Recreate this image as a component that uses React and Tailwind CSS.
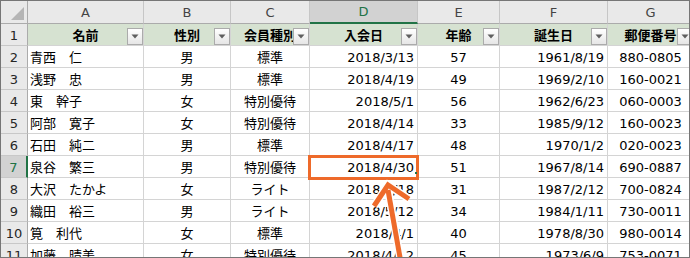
import React from "react";

const FONT = "font-['DejaVu_Sans','Noto_Sans_CJK_JP',sans-serif]";

const W = ["w-[116px]", "w-[87px]", "w-[79px]", "w-[108px]", "w-[82px]", "w-[108px]", "w-[86px]"];
const ALIGN = [
  "justify-start pl-[2px]",
  "justify-center",
  "justify-center",
  "justify-end pr-[3px]",
  "justify-center",
  "justify-end pr-[3px]",
  "justify-center",
];
const LETTERS = ["A", "B", "C", "D", "E", "F", "G"];
const HEAD = ["名前", "性別", "会員種別", "入会日", "年齢", "誕生日", "郵便番号"];

const DATA = [
  ["青西　仁", "男", "標準", "2018/3/13", "57", "1961/8/19", "880-0805"],
  ["浅野　忠", "男", "標準", "2018/4/19", "49", "1969/2/10", "160-0021"],
  ["東　幹子", "女", "特別優待", "2018/5/1", "56", "1962/6/23", "060-0003"],
  ["阿部　寛子", "女", "特別優待", "2018/4/14", "33", "1985/9/12", "160-0023"],
  ["石田　純二", "男", "標準", "2018/4/17", "48", "1970/1/2", "020-0023"],
  ["泉谷　繁三", "男", "特別優待", "2018/4/30", "51", "1967/8/14", "690-0887"],
  ["大沢　たかよ", "女", "ライト", "2018/4/18", "31", "1987/2/12", "700-0824"],
  ["織田　裕三", "男", "ライト", "2018/5/12", "34", "1984/1/11", "730-0011"],
  ["筧　利代", "女", "標準", "2018/4/1", "40", "1978/8/30", "980-0014"],
  ["加藤　晴美", "女", "特別優待", "2018/4/12", "45", "1973/6/9", "753-0071"],
];

function FilterButton() {
  return (
    <div className="absolute right-0 bottom-0 w-[16px] h-[17px] border border-[#ababab] bg-linear-to-b from-white to-[#e6e6e6] flex items-center justify-center">
      <svg width="8" height="5" viewBox="0 0 8 5">
        <polygon points="0.5,0.5 7.5,0.5 4,4.5" fill="#5f5f5f" />
      </svg>
    </div>
  );
}

function RowHeader({ n, selected }) {
  return (
    <div
      className={
        "shrink-0 w-[27px] h-full flex items-center justify-center pt-px border-b border-[#c8c8c8] " +
        (selected
          ? "bg-[#d2d2d2] text-[#217346] border-r-2 border-r-[#217346]"
          : "bg-[#e9e9e9] text-[#262626] border-r border-r-[#ababab]")
      }
    >
      {n}
    </div>
  );
}

export default function App() {
  return (
    <div className={"relative w-[690px] h-[258px] overflow-hidden border border-[#767676] bg-white text-[13px] leading-none " + FONT}>
      <div className="flex h-[23px]">
        <div className="shrink-0 w-[27px] h-full bg-[#e9e9e9] border-r border-b border-[#ababab] relative">
          <svg className="absolute left-[10px] top-[6px]" width="14" height="14" viewBox="0 0 14 14">
            <polygon points="13,0 13,13 0,13" fill="#b5b5b5" />
          </svg>
        </div>
        {LETTERS.map((l, i) => (
          <div
            key={l}
            className={
              "shrink-0 h-full flex items-center justify-center border-r border-[#c6c6c6] " +
              W[i] +
              (l === "D"
                ? " bg-[#d2d2d2] text-[#217346] border-b-2 border-b-[#217346]"
                : " bg-[#e9e9e9] text-[#444444] border-b border-b-[#ababab]")
            }
          >
            {l}
          </div>
        ))}
      </div>

      <div className="flex h-[22px]">
        <RowHeader n={1} />
        {HEAD.map((h, i) => (
          <div
            key={h}
            className={"relative shrink-0 h-full flex items-center justify-center pt-px bg-[#d6e2d1] border-r border-b border-[#d4d4d4] font-bold text-black " + W[i]}
          >
            <span className="whitespace-nowrap">{h}</span>
            <FilterButton />
          </div>
        ))}
      </div>

      {DATA.map((row, r) => (
        <div key={r} className="flex h-[22px]">
          <RowHeader n={r + 2} selected={r + 2 === 7} />
          {row.map((v, i) => (
            <div
              key={i}
              className={"shrink-0 h-full flex items-center pt-px border-r border-b border-[#d4d4d4] text-black whitespace-nowrap " + W[i] + " " + ALIGN[i]}
            >
              {v}
            </div>
          ))}
        </div>
      ))}

      <div className="absolute left-[307px] top-[154px] w-[111px] h-[25px] border-[3px] border-[#ee6a2a]" />
      <div className="absolute left-[414px] top-[171px] w-[2px] h-[2px] bg-[#217346]" />

      <svg className="absolute left-0 top-0" width="690" height="258" viewBox="0 0 690 258">
        <g fill="none" strokeLinecap="butt" strokeLinejoin="miter">
          <line x1="400" y1="262" x2="387" y2="189" stroke="white" strokeWidth="8" />
          <polyline points="373,205 387,184 408,198" stroke="white" strokeWidth="8" />
          <line x1="400" y1="262" x2="387" y2="189" stroke="#ee6a2a" strokeWidth="5" />
          <polyline points="373,205 387,184 408,198" stroke="#ee6a2a" strokeWidth="5" />
        </g>
      </svg>
    </div>
  );
}
